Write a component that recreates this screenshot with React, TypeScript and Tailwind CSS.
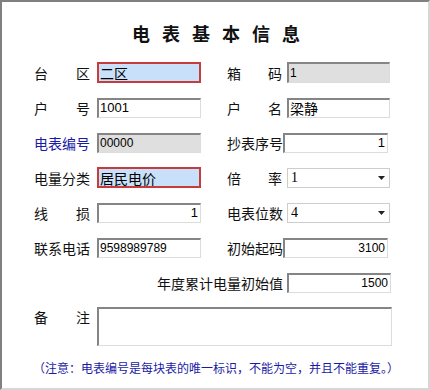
import React from 'react';

const cjk = "font-['Noto_Sans_CJK_SC',sans-serif]";
const num = "font-['Liberation_Sans','Noto_Sans_CJK_SC',sans-serif]";

function Label({ text, width, blue }: { text: string; width: string; blue?: boolean }) {
  const color = blue ? 'text-[#1a1aa6]' : 'text-[#111]';
  if (text.length === 2) {
    return (
      <span className={`${width} flex justify-between text-[14px] leading-[20px] ${cjk} ${color}`}>
        <span>{text[0]}</span>
        <span>{text[1]}</span>
      </span>
    );
  }
  return <span className={`${width} text-[14px] leading-[20px] whitespace-nowrap ${cjk} ${color}`}>{text}</span>;
}

// sunken win32 edit box
function Edit({
  value,
  className = '',
  right,
  gray,
}: {
  value: string;
  className?: string;
  right?: boolean;
  gray?: boolean;
}) {
  return (
    <div
      className={`h-[20px] flex items-center border-t-2 border-l-2 border-r border-b border-t-[#858585] border-l-[#858585] border-r-[#dcdcdc] border-b-[#dcdcdc] ${
        gray ? 'bg-[#dfdfdf]' : 'bg-white'
      } ${right ? 'justify-end pr-[2px]' : 'pl-[1px]'} text-[12px] text-black ${num} ${className}`}
    >
      {value}
    </div>
  );
}

// focused / highlighted edit box
function Focus({ value }: { value: string }) {
  return (
    <div className={`w-[104px] h-[21px] flex items-center pl-[1px] border-2 border-[#c43c3c] bg-[#c9e0fb] text-[14px] leading-[18px] text-black ${cjk}`}>
      {value}
    </div>
  );
}

function Combo({ value }: { value: string }) {
  return (
    <div className="ml-[5px] w-[103px] h-[20px] flex items-center justify-between pl-[3px] pr-[4px] border border-[#cdcdcd] bg-white">
      <span className="text-[14px] leading-[18px] font-['Liberation_Serif',serif] text-black">{value}</span>
      <svg width="7" height="4" viewBox="0 0 7 4">
        <polygon points="0,0 7,0 3.5,4" fill="#222" />
      </svg>
    </div>
  );
}

export default function App() {
  return (
    <div className="w-[430px] h-[390px] bg-white border-t-2 border-l-2 border-r-2 border-b-2 border-t-[#808080] border-l-[#808080] border-r-[#d6d6d6] border-b-[#d6d6d6] flex flex-col">
      <div className={`mt-[19px] h-[24px] leading-[24px] text-center pl-[14px] text-[18px] font-bold tracking-[12px] text-[#111] ${cjk}`}>
        电表基本信息
      </div>

      <div className="mt-[10px] pl-[32px] flex flex-col">
        {/* row 1 */}
        <div className="h-[35px] flex items-center">
          <div className="w-[193px] flex items-center">
            <Label text="台区" width="w-[56px]" />
            <div className="ml-[7px]">
              <Focus value="二区" />
            </div>
          </div>
          <Label text="箱码" width="w-[55px]" />
          <Edit value="1" gray className="ml-[5px] w-[103px] h-[21px]" />
        </div>

        {/* row 2 */}
        <div className="h-[35px] flex items-center">
          <div className="w-[193px] flex items-center">
            <Label text="户号" width="w-[56px]" />
            <Edit value="1001" className="ml-[7px] w-[104px] text-[13px]" />
          </div>
          <Label text="户名" width="w-[55px]" />
          <Edit value="梁静" className={`ml-[5px] w-[103px] text-[14px] ${cjk}`} />
        </div>

        {/* row 3 */}
        <div className="h-[35px] flex items-center">
          <div className="w-[193px] flex items-center">
            <Label text="电表编号" width="w-[56px]" blue />
            <Edit value="00000" gray className="ml-[7px] w-[104px]" />
          </div>
          <Label text="抄表序号" width="w-[55px]" />
          <Edit value="1" right className="ml-[1px] w-[105px] text-[13px]" />
        </div>

        {/* row 4 */}
        <div className="h-[35px] flex items-center">
          <div className="w-[193px] flex items-center">
            <Label text="电量分类" width="w-[56px]" />
            <div className="ml-[7px]">
              <Focus value="居民电价" />
            </div>
          </div>
          <Label text="倍率" width="w-[55px]" />
          <Combo value="1" />
        </div>

        {/* row 5 */}
        <div className="h-[35px] flex items-center">
          <div className="w-[193px] flex items-center">
            <Label text="线损" width="w-[56px]" />
            <Edit value="1" right className="ml-[7px] w-[104px] text-[13px]" />
          </div>
          <Label text="电表位数" width="w-[55px]" />
          <Combo value="4" />
        </div>

        {/* row 6 */}
        <div className="h-[35px] flex items-center">
          <div className="w-[193px] flex items-center">
            <Label text="联系电话" width="w-[56px]" />
            <Edit value="9598989789" className="ml-[7px] w-[104px]" />
          </div>
          <Label text="初始起码" width="w-[55px]" />
          <Edit value="3100" right className="ml-[1px] w-[105px]" />
        </div>

        {/* row 7 */}
        <div className="h-[35px] flex items-center pl-[123px]">
          <Label text="年度累计电量初始值" width="w-[126px]" />
          <Edit value="1500" right className="ml-[4px] w-[104px]" />
        </div>

        {/* remarks */}
        <div className="mt-[7px] flex items-start">
          <Label text="备注" width="w-[56px]" />
          <div className="ml-[7px] w-[295px] h-[39px] border-t-2 border-l-2 border-r border-b border-t-[#858585] border-l-[#858585] border-r-[#dcdcdc] border-b-[#dcdcdc] bg-white" />
        </div>

        <div className={`mt-[12px] -ml-[1px] h-[20px] leading-[20px] text-[12px] tracking-[0px] whitespace-nowrap text-[#1a1aa6] ${cjk}`}>
          （注意：电表编号是每块表的唯一标识，不能为空，并且不能重复。）
        </div>
      </div>
    </div>
  );
}
